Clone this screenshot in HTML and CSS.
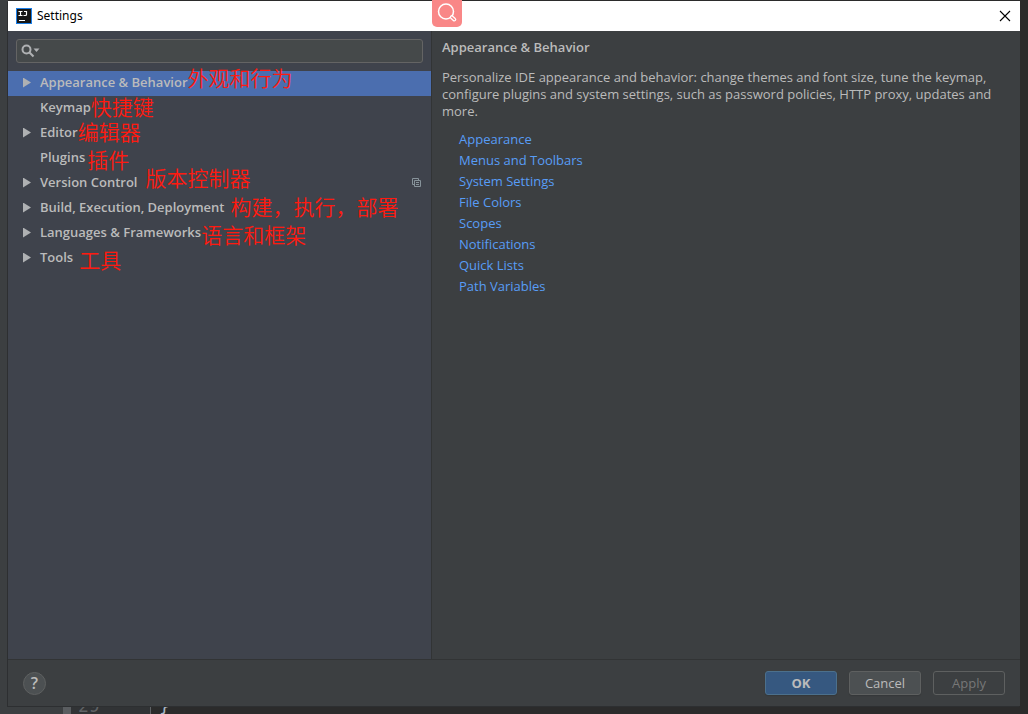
FILE: index.html
```html
<!DOCTYPE html>
<html lang="en">
<head>
<meta charset="utf-8">
<title>Settings</title>
<link rel="stylesheet" href="styles.css">
</head>
<body>
<div class="editor" aria-hidden="true">
  <span class="editor-bar"></span>
  <span class="editor-gutter">29</span>
  <span class="editor-code">}</span>
</div>
<main class="window">
  <header class="titlebar">
    <svg class="logo" viewBox="0 0 16 16"><rect x=".5" y=".5" width="15" height="15" fill="#171717" stroke="#1c7fe8"/><path d="M2.500 3.500h4M4.500 3.500v4M2.500 7.500h4M8 3.500h3M10.500 3v3.500q0 1-1 1h-2M3 12.500h6" fill="none" stroke="#fff" stroke-width="1.200"/></svg>
    <h1 class="title">Settings</h1>
    <button class="close" aria-label="Close"><svg viewBox="0 0 10 10"><path d="M0 0l10 10M10 0L0 10" stroke="#000" stroke-width="1.100"/></svg></button>
  </header>
  <button class="lens" aria-label="Search image"><svg viewBox="0 0 30 27"><circle cx="14" cy="11.500" r="7.500" fill="none" stroke="#fff" stroke-width="1.500"/><path d="M19.800 17.200l2.500 2.300" stroke="#fff" stroke-width="4" stroke-linecap="round"/><path d="M19.800 17.200l2.500 2.300" stroke="#f98787" stroke-width="1.500" stroke-linecap="round"/></svg></button>
  <div class="content">
    <aside class="sidebar">
      <label class="search">
        <svg viewBox="0 0 20 14"><circle cx="5.500" cy="5.500" r="4" fill="none" stroke="#afb1b3" stroke-width="2"/><path d="M8.500 8.500l4 4" stroke="#afb1b3" stroke-width="2.200"/><path d="M12.500 4.500h6l-3 3.500z" fill="#afb1b3"/></svg>
        <input type="text" aria-label="Search settings">
      </label>
      <nav class="tree">
        <button class="row selected"><i class="arrow"></i><span class="name">Appearance &amp; Behavior<em class="note raised">外观和行为</em></span></button>
        <button class="row"><span class="name">Keymap<em class="note">快捷键</em></span></button>
        <button class="row"><i class="arrow"></i><span class="name">Editor<em class="note">编辑器</em></span></button>
        <button class="row"><span class="name">Plugins<em class="note near lowered">插件</em></span></button>
        <button class="row"><i class="arrow"></i><span class="name">Version Control<em class="note far raised">版本控制器</em></span><svg class="copy" viewBox="0 0 9 9"><path d="M2 6.500H.5v-6h6V2M2.500 2.500h6v6h-6zM4 4.500h3M4 6.500h3" fill="none" stroke="#87939a"/></svg></button>
        <button class="row"><i class="arrow"></i><span class="name">Build, Execution, Deployment<em class="note mid">构建，执行，部署</em></span></button>
        <button class="row"><i class="arrow"></i><span class="name">Languages &amp; Frameworks<em class="note lowered">语言和框架</em></span></button>
        <button class="row"><i class="arrow"></i><span class="name">Tools<em class="note mid lowered">工具</em></span></button>
      </nav>
    </aside>
    <section class="page">
      <h2 class="heading">Appearance &amp; Behavior</h2>
      <p class="intro">Personalize IDE appearance and behavior: change themes and font size, tune the keymap, configure plugins and system settings, such as password policies, HTTP proxy, updates and more.</p>
      <div class="links">
        <a href="#appearance">Appearance</a>
        <a href="#menus">Menus and Toolbars</a>
        <a href="#system">System Settings</a>
        <a href="#colors">File Colors</a>
        <a href="#scopes">Scopes</a>
        <a href="#notifications">Notifications</a>
        <a href="#quick">Quick Lists</a>
        <a href="#path">Path Variables</a>
      </div>
    </section>
  </div>
  <footer class="footer">
    <button class="help" aria-label="Help">?</button>
    <button class="button primary">OK</button>
    <button class="button">Cancel</button>
    <button class="button" disabled>Apply</button>
  </footer>
</main>
</body>
</html>
```
FILE: styles.css
```css
* { box-sizing: border-box; }
body {
  position: relative;
  display: flex;
  height: 100vh;
  margin: 0;
  padding: 1px 8px 8px;
  overflow: hidden;
  background: linear-gradient(90deg, #3c3f41 8px, #2b2b2b 8px);
  color: #bbb;
  font: 13px/17px "Open Sans", "Noto Sans CJK SC", sans-serif;
}
button { padding: 0; border: 0; background: none; color: inherit; font: inherit; }
h1, h2, p { margin: 0; font-size: inherit; }

.editor {
  position: absolute;
  inset: auto 0 0;
  display: flex;
  height: 20px;
  padding-left: 63px;
  background: linear-gradient(90deg, #3c3f41 71px, #313335 71px 150px, #2b2b2b 150px);
  color: #606366;
  font: 18px/24px "DejaVu Sans Mono", monospace;
}
.editor-bar { width: 8px; background: #5a5d60; }
.editor-gutter { width: 80px; padding-left: 7px; border-right: 1px solid #606366; }
.editor-code { padding-left: 8px; color: #a9b7c6; }

.window {
  position: relative;
  display: flex;
  flex: 1;
  flex-direction: column;
  background: #3c3f41;
  box-shadow: -1px 1px #2d2f31;
}
.titlebar {
  display: flex;
  align-items: center;
  height: 30px;
  padding: 0 10px 0 8px;
  background: #fff;
  color: #000;
}
.logo { width: 16px; height: 16px; margin-right: 5px; }
.title { flex: 1; font: 12px/16px "Noto Sans", sans-serif; }
.close { width: 10px; height: 10px; }
.close svg { display: block; overflow: visible; }
.lens {
  position: absolute;
  top: -1px;
  left: 42%;
  width: 30px;
  height: 27px;
  margin-left: -1px;
  border-radius: 0 0 5px 5px;
  background: #f98787;
}
.lens svg { display: block; }

.content { display: grid; grid-template-columns: 424px 1fr; flex: 1; }
.sidebar { border-right: 1px solid #323435; background: #3f434c; }
.search {
  display: flex;
  align-items: center;
  height: 24px;
  margin: 8px;
  padding-left: 4px;
  border: 1px solid #646464;
  border-radius: 3px;
  background: #45494a;
}
.search svg { width: 20px; height: 14px; }
.search input { flex: 1; min-width: 0; border: 0; outline: 0; background: none; color: #bbb; font: inherit; }
.tree { display: flex; flex-direction: column; }
.row {
  display: grid;
  grid-template-columns: 17px 1fr auto;
  align-items: center;
  height: 25px;
  padding: 0 10px 2px 15px;
  font-weight: 600;
  text-align: left;
}
.selected { background: #4b6eaf; }
.arrow { width: 8px; height: 10px; background: #afb1b3; clip-path: polygon(0 0, 100% 50%, 0 100%); }
.name { position: relative; grid-column: 2; justify-self: start; white-space: nowrap; }
.copy { width: 9px; height: 9px; }
.note {
  position: absolute;
  top: -5px;
  left: 100%;
  color: #ff1a10;
  font: 350 21px/24px "Noto Sans CJK SC", sans-serif;
}
.raised { top: -9px; }
.lowered { top: -2px; }
.near { margin-left: 2px; }
.mid { margin-left: 6px; }
.far { margin-left: 8px; }

.page { padding: 8px 12px 8px 10px; }
.heading { font-weight: 600; }
.intro { margin-top: 13px; }
.links { display: flex; flex-direction: column; align-items: flex-start; gap: 4px; margin: 11px 0 0 17px; }
.links a { color: #589df6; text-decoration: none; }

.footer {
  display: flex;
  align-items: center;
  gap: 12px;
  height: 47px;
  padding: 0 15px;
  border-top: 1px solid #323435;
}
.help {
  width: 23px;
  height: 23px;
  margin-right: auto;
  border: 1px solid #5e6060;
  border-radius: 50%;
  background: #4c5052;
  font: 600 16px/20px "Open Sans", sans-serif;
}
.button {
  width: 72px;
  height: 24px;
  border: 1px solid #5e6060;
  border-radius: 3px;
  background: #4c5052;
  box-shadow: 0 1px 1px #35383a;
}
.button:disabled { background: none; box-shadow: none; color: #777; }
.primary { border-color: #4c708c; background: #365880; font-weight: 700; }
```
